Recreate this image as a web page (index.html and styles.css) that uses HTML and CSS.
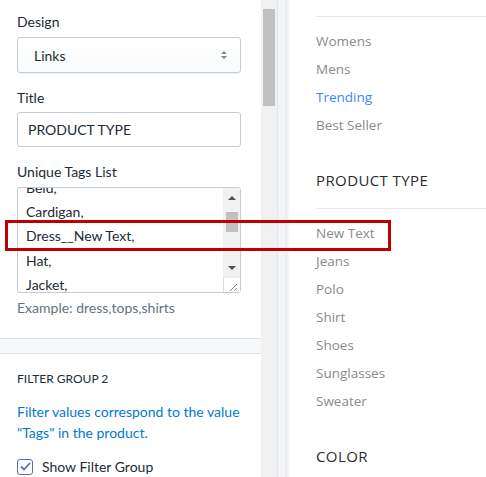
FILE: index.html
```html
<!DOCTYPE html>
<html>
<head>
<meta charset="utf-8">
<link rel="stylesheet" href="styles.css">
</head>
<body>
<div class="page">
  <div class="sidebar">
    <div class="section">
      <div class="field">
        <div class="label">Design</div>
        <div class="select">
          <span>Links</span>
          <svg class="arrows" width="8" height="10" viewBox="0 0 8 10"><path d="M1 4 L4 1 L7 4 Z M1 6 L4 9 L7 6 Z" fill="#7d8895"/></svg>
        </div>
      </div>
      <div class="field">
        <div class="label tight">Title</div>
        <div class="input">PRODUCT TYPE</div>
      </div>
      <div class="field">
        <div class="label">Unique Tags List</div>
        <div class="textarea">
          <div class="ta-text">
            <div>Beld,</div>
            <div>Cardigan,</div>
            <div>Dress__New Text,</div>
            <div>Hat,</div>
            <div>Jacket,</div>
          </div>
          <div class="ta-scroll">
            <svg class="ta-up" width="10" height="6" viewBox="0 0 10 6"><path d="M1 5 L5 1 L9 5 Z" fill="#505050"/></svg>
            <div class="ta-thumb"></div>
            <svg class="ta-down" width="10" height="6" viewBox="0 0 10 6"><path d="M1 1 L5 5 L9 1 Z" fill="#505050"/></svg>
            <div class="ta-corner">
              <svg width="15" height="15" viewBox="0 0 15 15"><path d="M13 6 L6 13 M13 10 L10 13" stroke="#888" stroke-width="1"/></svg>
            </div>
          </div>
        </div>
        <div class="help">Example: dress,tops,shirts</div>
      </div>
    </div>
    <div class="band"></div>
    <div class="section second">
      <div class="group-title">FILTER GROUP 2</div>
      <p class="note">Filter values correspond to the value "Tags" in the product.</p>
      <label class="check">
        <span class="box">
          <svg width="11" height="9" viewBox="0 0 11 9"><path d="M1 4.5 L4 7.5 L10 1" fill="none" stroke="#5c6ac4" stroke-width="1.8"/></svg>
        </span>
        <span>Show Filter Group</span>
      </label>
    </div>
  </div>
  <div class="scrollbar"><div class="thumb"></div></div>
  <div class="divider"></div>
  <div class="preview">
    <div class="rule"></div>
    <ul class="links">
      <li>Womens</li>
      <li>Mens</li>
      <li class="active">Trending</li>
      <li>Best Seller</li>
    </ul>
    <h3 class="heading">PRODUCT TYPE</h3>
    <div class="rule"></div>
    <ul class="links">
      <li>New Text</li>
      <li>Jeans</li>
      <li>Polo</li>
      <li>Shirt</li>
      <li>Shoes</li>
      <li>Sunglasses</li>
      <li>Sweater</li>
    </ul>
    <h3 class="heading">COLOR</h3>
  </div>
  <div class="highlight"></div>
</div>
</body>
</html>
```
FILE: styles.css
```css
* { box-sizing: border-box; }
html, body { margin: 0; padding: 0; background: #fff; }
body { width: 486px; height: 477px; overflow: hidden; }
.page {
  position: relative;
  display: flex;
  height: 477px;
  overflow: hidden;
}
.sidebar {
  width: 261px;
  flex: none;
  font-family: "Lato", "Open Sans", sans-serif;
  font-size: 14px;
  color: #212b36;
  background: #fff;
}
.section { padding: 12px 20px 20px 17px; }
.field { margin-bottom: 15px; }
.field:last-child { margin-bottom: 0; }
.label { line-height: 20px; height: 20px; margin-bottom: 5px; }
.label.tight { margin-bottom: 4px; }
.select {
  height: 36px;
  border: 1px solid #c4cdd5;
  border-radius: 3px;
  background: linear-gradient(#fff, #f9fafb);
  box-shadow: 0 1px 0 rgba(22,29,37,.05);
  display: flex;
  align-items: center;
  justify-content: space-between;
  padding: 0 12px 0 16px;
}
.arrows { display: block; }
.input {
  height: 35px;
  border: 1px solid #c4cdd5;
  border-radius: 3px;
  display: flex;
  align-items: center;
  padding: 0 10px;
}
.textarea {
  height: 106px;
  border: 1px solid #c4cdd5;
  border-radius: 3px;
  display: flex;
  overflow: hidden;
}
.ta-text {
  flex: 1;
  padding: 0 8px;
  margin-top: -12px;
  line-height: 24.2px;
}
.ta-scroll {
  width: 17px;
  flex: none;
  background: #f1f1f1;
  display: flex;
  flex-direction: column;
  align-items: center;
}
.ta-up { margin-top: 7px; }
.ta-thumb {
  width: 12px;
  height: 20px;
  background: #c1c1c1;
  margin-top: 11px;
}
.ta-down { margin-top: 33px; }
.ta-corner {
  margin-top: auto;
  width: 17px;
  height: 15px;
  background: #fff;
  border-left: 1px solid #dcdcdc;
  border-top: 1px solid #eee;
}
.ta-corner svg { display: block; }
.help {
  line-height: 20px;
  margin-top: 5px;
  color: #637381;
}
.band {
  height: 16px;
  border-top: 1px solid #dfe3e8;
  border-bottom: 1px solid #dfe3e8;
  background: #f7f8fb;
}
.section.second { padding-top: 17px; }
.group-title {
  font-size: 12px;
  line-height: 16px;
}
.note {
  margin: 14px 0 0;
  color: #007ace;
  line-height: 21px;
}
.check {
  display: flex;
  align-items: center;
  gap: 9px;
  margin-top: 15px;
}
.box {
  width: 16px;
  height: 16px;
  border: 1px solid #5c6ac4;
  border-radius: 3px;
  display: flex;
  align-items: center;
  justify-content: center;
}
.box svg { display: block; }
.scrollbar {
  width: 16px;
  flex: none;
  background: #f1f1f1;
  padding: 9px 2px 0;
}
.thumb { height: 97px; background: #c1c1c1; }
.divider {
  width: 13px;
  flex: none;
  border-left: 1px solid #e4e5e9;
  background: linear-gradient(to right, #f3f4f7 0, #f3f4f7 7px, #e9eaee 8px, #fff 100%);
}
.preview {
  flex: 1;
  padding: 16px 0 0 26px;
  font-family: "Open Sans", sans-serif;
  min-width: 0;
}
.rule { height: 1px; background: #e6e6e6; margin-right: -10px; }
.links {
  list-style: none;
  margin: 0;
  padding: 10px 0 0;
}
.links li {
  font-size: 13.5px;
  line-height: 28px;
  color: #8a8a8a;
}
.links li.active { color: #3d87f5; }
.heading {
  margin: 31px 0 18px;
  font-size: 15px;
  font-weight: 400;
  line-height: 20px;
  color: #2b2b2b;
  letter-spacing: 0.4px;
}
.highlight {
  position: absolute;
  left: 5px;
  top: 220px;
  width: 386px;
  height: 31px;
  border: 3px solid #c00000;
}
```
